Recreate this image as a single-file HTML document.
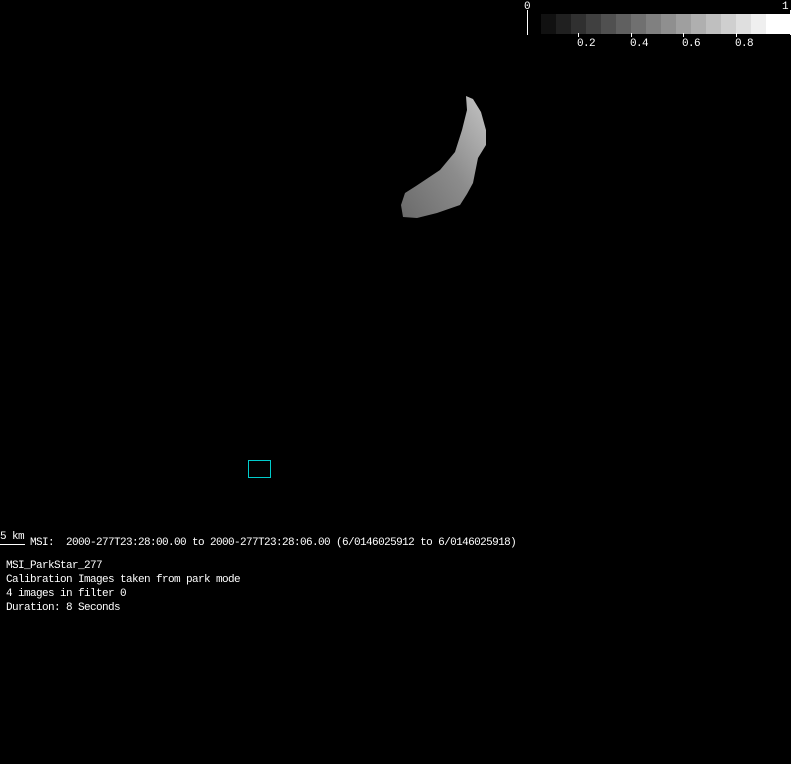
<!DOCTYPE html>
<html><head><style>
html,body{margin:0;padding:0;background:#000;width:791px;height:764px;overflow:hidden;position:relative}
.t{position:absolute;color:#fff;font:11px "Liberation Mono",monospace;letter-spacing:-0.6px;white-space:pre;line-height:14px}
</style></head><body>
<div style="position:absolute;left:527px;top:10px;width:1px;height:25px;background:#fff"></div>
<div style="position:absolute;left:790px;top:10px;width:1px;height:25px;background:#fff"></div>
<div class="t" style="left:524px;top:0px">0</div>
<div class="t" style="left:782px;top:0px">1</div>
<svg style="position:absolute;left:0;top:0" width="791" height="764">
<g>
<rect x="541" y="14" width="15" height="20" fill="#111"/>
<rect x="556" y="14" width="15" height="20" fill="#202020"/>
<rect x="571" y="14" width="15" height="20" fill="#303030"/>
<rect x="586" y="14" width="15" height="20" fill="#404040"/>
<rect x="601" y="14" width="15" height="20" fill="#505050"/>
<rect x="616" y="14" width="15" height="20" fill="#606060"/>
<rect x="631" y="14" width="15" height="20" fill="#707070"/>
<rect x="646" y="14" width="15" height="20" fill="#808080"/>
<rect x="661" y="14" width="15" height="20" fill="#8f8f8f"/>
<rect x="676" y="14" width="15" height="20" fill="#9f9f9f"/>
<rect x="691" y="14" width="15" height="20" fill="#afafaf"/>
<rect x="706" y="14" width="15" height="20" fill="#bfbfbf"/>
<rect x="721" y="14" width="15" height="20" fill="#cfcfcf"/>
<rect x="736" y="14" width="15" height="20" fill="#dfdfdf"/>
<rect x="751" y="14" width="15" height="20" fill="#efefef"/>
<rect x="766" y="14" width="24" height="20" fill="#fff"/>
</g>
<g stroke="#fff" stroke-width="1">
<line x1="578.5" y1="33" x2="578.5" y2="37"/><line x1="631.5" y1="33" x2="631.5" y2="37"/>
<line x1="683.5" y1="33" x2="683.5" y2="37"/><line x1="736.5" y1="33" x2="736.5" y2="37"/>
</g>
<defs><linearGradient id="g" x1="0" y1="1" x2="1" y2="0">
<stop offset="0" stop-color="#6a6a6a"/><stop offset="0.5" stop-color="#8c8c8c"/><stop offset="1" stop-color="#c4c4c4"/></linearGradient></defs>
<path d="M466,96 L473,99 L481,112 L486,130 L486,145 L478,158 L473,183 L467,194 L460,205 L437,213 L417,218 L403,217 L401,205 L405,193 L416,186 L440,170 L455,152 L462,130 L467,110 Z" fill="url(#g)"/>
<rect x="248.5" y="460.5" width="22" height="17" fill="none" stroke="#0cc" stroke-width="1"/>
<line x1="0" y1="544.5" x2="25" y2="544.5" stroke="#fff"/>
</svg>
<div class="t" style="left:577px;top:37px">0.2</div>
<div class="t" style="left:630px;top:37px">0.4</div>
<div class="t" style="left:682px;top:37px">0.6</div>
<div class="t" style="left:735px;top:37px">0.8</div>
<div class="t" style="left:0px;top:530px">5 km</div>
<div class="t" style="left:30px;top:536px">MSI:  2000-277T23:28:00.00 to 2000-277T23:28:06.00 (6/0146025912 to 6/0146025918)</div>
<div class="t" style="left:6px;top:559px">MSI_ParkStar_277
Calibration Images taken from park mode
4 images in filter 0
Duration: 8 Seconds</div>
</body></html>
